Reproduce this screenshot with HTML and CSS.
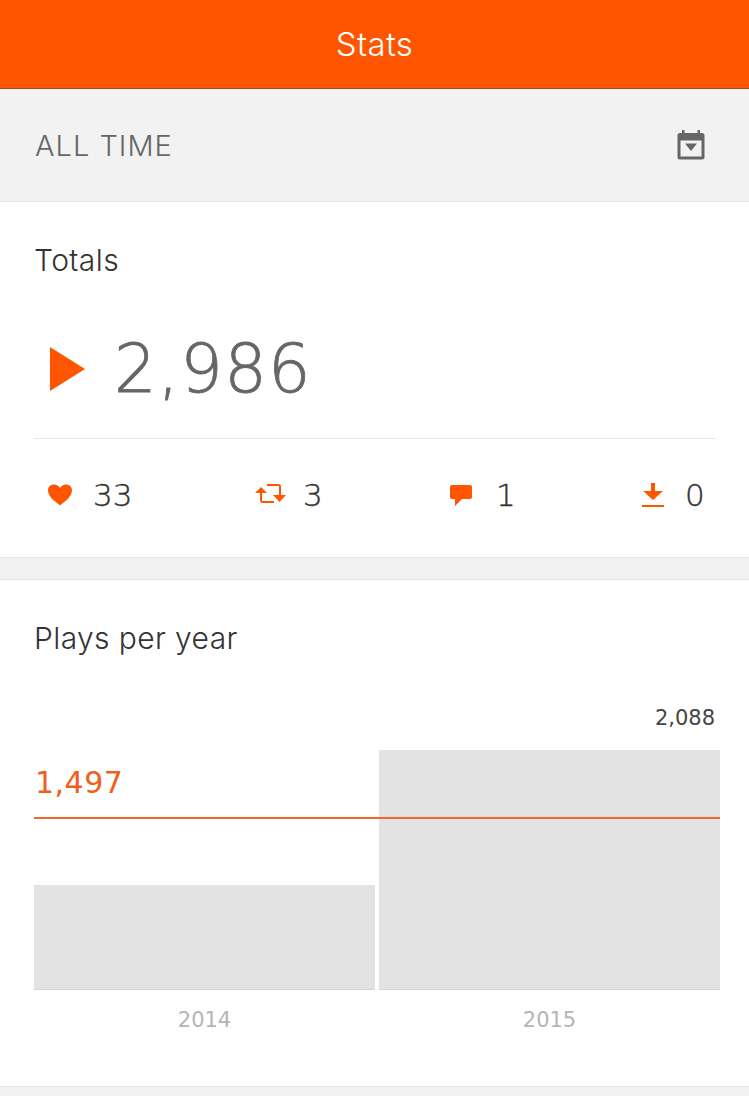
FILE: index.html
```html
<!DOCTYPE html>
<html lang="en">
<head>
<meta charset="utf-8">
<title>Stats</title>
<link rel="stylesheet" href="styles.css">
</head>
<body>
<header class="topbar">Stats</header>
<div class="filter">
  <span class="filter-label">ALL TIME</span>
  <svg class="cal" viewBox="0 0 30 30" width="30" height="30"><path d="M6 0h2.500v3h13V0H24v3h2a2.500 2.500 0 0 1 2.500 2.500V27a2.500 2.500 0 0 1-2.500 2.500H4A2.500 2.500 0 0 1 1.500 27V5.500A2.500 2.500 0 0 1 4 3h2zM4.500 10.500V26.500h21V10.500z" fill-rule="evenodd"/><path d="M9 13.500h12l-6 7.500z"/></svg>
</div>
<section class="card totals">
  <h2 class="card-title">Totals</h2>
  <div class="plays">
    <svg class="play" viewBox="0 0 35 44" width="35" height="44"><path d="M0 0l35 22L0 44z"/></svg>
    <span class="plays-num">2,986</span>
  </div>
  <div class="stats">
    <div class="stat">
      <svg class="ico" viewBox="0 0 26 24" width="26" height="24"><path d="M13 22.500C9 19 1 14 1 7.500 1 3.500 4 1.500 7 1.500c2.500 0 4.800 1.300 6 3.500 1.200-2.200 3.500-3.500 6-3.500 3 0 6 2 6 6 0 6.500-8 11.500-12 15z"/></svg>
      <span class="num">33</span>
    </div>
    <div class="stat stat-tight">
      <svg class="ico" viewBox="0 0 32 24" width="32" height="24"><path class="ln" d="M7 9v8a2 2 0 0 0 2 2h11M26 13V4a2 2 0 0 0-2-2H13"/><path d="M1 10l6-6 6 6zM19 12h13l-6.500 7z"/></svg>
      <span class="num">3</span>
    </div>
    <div class="stat stat-wide">
      <svg class="ico" viewBox="0 0 24 26" width="24" height="26"><path d="M3 3h18a2 2 0 0 1 2 2v10a2 2 0 0 1-2 2H13l-7 7v-7H3a2 2 0 0 1-2-2V5a2 2 0 0 1 2-2z"/></svg>
      <span class="num">1</span>
    </div>
    <div class="stat">
      <svg class="ico" viewBox="0 0 24 26" width="24" height="26"><path d="M10 1h4v8h8l-10 9L2 9h8z"/><path d="M1 23h22v2H1z"/></svg>
      <span class="num">0</span>
    </div>
  </div>
</section>
<section class="card years">
  <h2 class="card-title">Plays per year</h2>
  <div class="chart">
    <div class="col">
      <div class="bar bar-2014"></div>
      <div class="year">2014</div>
    </div>
    <div class="col">
      <div class="bar-val">2,088</div>
      <div class="bar bar-2015"></div>
      <div class="year">2015</div>
    </div>
    <div class="avg"><span class="avg-num">1,497</span></div>
  </div>
</section>
</body>
</html>
```
FILE: styles.css
```css
* { box-sizing: border-box; }
html, body { margin: 0; padding: 0; }
body {
  width: 749px;
  height: 1096px;
  overflow: hidden;
  background: #f2f2f2;
  font-family: Inter, "Open Sans", sans-serif;
  color: #333;
}
.topbar {
  height: 89px;
  background: #ff5500;
  border-bottom: 1px solid #a8481c;
  color: #fff;
  font-size: 33px;
  font-weight: 300;
  letter-spacing: 0.400px;
  line-height: 88px;
  text-align: center;
}
.filter {
  height: 113px;
  border-bottom: 1px solid #e5e5e5;
  padding: 0 43px 0 35px;
  display: flex;
  align-items: center;
  justify-content: space-between;
}
.filter-label {
  font-size: 29px;
  font-weight: 300;
  letter-spacing: 1px;
  color: #666;
}
.cal { fill: #666; }
.card {
  background: #fff;
  border-bottom: 1px solid #e5e5e5;
}
.card-title {
  margin: 0;
  font-size: 30px;
  font-weight: 300;
  letter-spacing: 0.400px;
  line-height: 40px;
  color: #333;
}
.totals {
  height: 356px;
  padding: 38px 33px 0 34px;
}
.plays {
  display: flex;
  align-items: center;
  height: 159px;
  padding: 20px 0 0 16px;
  gap: 29px;
  border-bottom: 1px solid #e8e8e8;
}
.play { fill: #ff5500; }
.plays-num {
  font-family: "DejaVu Sans", sans-serif;
  font-size: 67px;
  font-weight: 200;
  letter-spacing: 1.200px;
  -webkit-text-stroke: 0.800px #666;
  color: #666;
}
.stats {
  display: grid;
  grid-template-columns: 207px 195px 192px auto;
  align-items: center;
  height: 112px;
  padding: 0 0 0 13px;
}
.stat { display: flex; align-items: center; gap: 20px; }
.stat-tight { gap: 17px; }
.stat-wide { gap: 23px; }
.ico { fill: #ff5500; }
.ln { fill: none; stroke: #ff5500; stroke-width: 2; }
.num {
  font-family: "DejaVu Sans", sans-serif;
  font-size: 31px;
  font-weight: 200;
  -webkit-text-stroke: 0.400px #333;
  color: #333;
}
.years {
  height: 508px;
  margin-top: 21px;
  border-top: 1px solid #e5e5e5;
  padding: 38px 29px 0 34px;
}
.chart {
  position: relative;
  display: flex;
  align-items: flex-end;
  gap: 4px;
  height: 392px;
}
.col {
  flex: 1;
  display: flex;
  flex-direction: column;
  align-items: stretch;
}
.bar {
  background: #e3e3e3;
  border-bottom: 1px solid #d5d5d5;
}
.bar-2014 { height: 105px; }
.bar-2015 { height: 240px; }
.bar-val {
  font-family: "DejaVu Sans", sans-serif;
  text-align: right;
  font-size: 21px;
  line-height: 28px;
  padding-right: 5px;
  margin-bottom: 18px;
  color: #444;
}
.year {
  font-family: "DejaVu Sans", sans-serif;
  height: 60px;
  padding-top: 14px;
  text-align: center;
  font-size: 21px;
  line-height: 32px;
  color: #b5b5b5;
}
.avg {
  position: absolute;
  left: 0;
  right: 0;
  top: 159px;
  height: 2px;
  background: #f0682a;
}
.avg-num {
  font-family: "DejaVu Sans", sans-serif;
  position: absolute;
  left: 1px;
  bottom: 16px;
  font-size: 30px;
  letter-spacing: 0.500px;
  line-height: 40px;
  color: #f0601c;
}
```
